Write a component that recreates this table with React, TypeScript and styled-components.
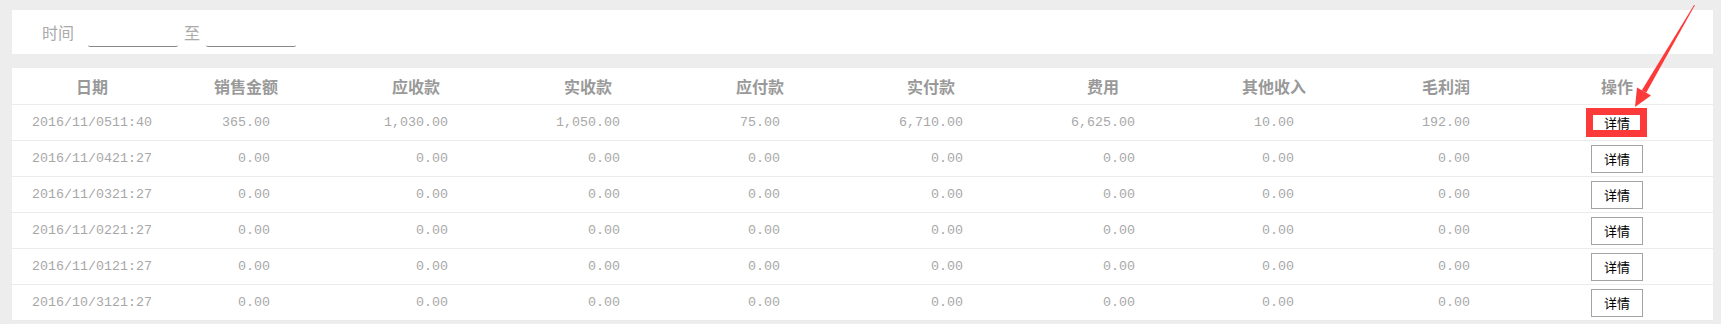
import React from "react";
import styled, { createGlobalStyle } from "styled-components";

const GlobalStyle = createGlobalStyle`
  html, body {
    margin: 0;
    padding: 0;
    background: #ededed;
  }
  * { box-sizing: border-box; }
`;

const COLS = "160px 148px 192px 152px 192px 150px 194px 148px 196px 146px";

const Page = styled.div`
  position: relative;
  width: 1721px;
  height: 324px;
  overflow: hidden;
  padding: 10px 8px 0 12px;
  font-family: "Noto Sans CJK SC", "Noto Sans", sans-serif;
`;

const FilterBar = styled.div`
  height: 44px;
  background: #fff;
  display: flex;
  align-items: center;
  padding-left: 30px;
  color: #aaa;
  font-size: 16px;
`;

const FilterLabel = styled.span`
  margin-right: 14px;
  line-height: 1;
`;

const DateInput = styled.input`
  width: 90px;
  height: 20px;
  margin-top: 10px;
  border: none;
  border-bottom: 1px solid #888;
  border-radius: 0 0 2px 2px;
  background: transparent;
  outline: none;
  padding: 0;
`;

const Separator = styled.span`
  margin: 0 6px;
  line-height: 1;
`;

const TablePanel = styled.div`
  margin-top: 14px;
  background: #fff;
`;

const Row = styled.div<{ $header?: boolean }>`
  display: grid;
  grid-template-columns: ${COLS};
  height: ${(p) => (p.$header ? "37px" : "36px")};
  border-bottom: 1px solid #ebebeb;
`;

const HeadCell = styled.div`
  display: flex;
  align-items: center;
  justify-content: center;
  font-size: 16px;
  font-weight: 700;
  color: #999;
  padding-bottom: 1px;
`;

const Cell = styled.div`
  display: flex;
  align-items: center;
  justify-content: center;
  font-family: "Liberation Mono", "DejaVu Sans Mono", monospace;
  font-size: 13.33px;
  color: #a8a8a8;
  white-space: nowrap;
`;

const Value = styled.span<{ $chars: number }>`
  display: inline-block;
  width: ${(p) => p.$chars}ch;
  text-align: right;
`;

const DetailButton = styled.button`
  width: 52px;
  height: 28px;
  border: 1px solid #a3a3a3;
  background: #fff;
  color: #000;
  font-family: "Noto Sans CJK SC", sans-serif;
  font-size: 13px;
  padding: 0;
  cursor: pointer;
`;

const HighlightBox = styled.div`
  position: absolute;
  left: 1586px;
  top: 108px;
  width: 61px;
  height: 29px;
  border: 7px solid #fd3a3a;
  pointer-events: none;
`;

const ArrowLayer = styled.svg`
  position: absolute;
  left: 0;
  top: 0;
  pointer-events: none;
`;

const headers = ["日期", "销售金额", "应收款", "实收款", "应付款", "实付款", "费用", "其他收入", "毛利润", "操作"];

const zeros = ["0.00", "0.00", "0.00", "0.00", "0.00", "0.00", "0.00", "0.00"];

const rows: string[][] = [
  ["2016/11/0511:40", "365.00", "1,030.00", "1,050.00", "75.00", "6,710.00", "6,625.00", "10.00", "192.00"],
  ["2016/11/0421:27", ...zeros],
  ["2016/11/0321:27", ...zeros],
  ["2016/11/0221:27", ...zeros],
  ["2016/11/0121:27", ...zeros],
  ["2016/10/3121:27", ...zeros],
];

const colChars = rows[0].map((v) => v.length);

export default function App() {
  return (
    <>
      <GlobalStyle />
      <Page>
        <FilterBar>
          <FilterLabel>时间</FilterLabel>
          <DateInput type="text" />
          <Separator>至</Separator>
          <DateInput type="text" />
        </FilterBar>
        <TablePanel>
          <Row $header>
            {headers.map((h) => (
              <HeadCell key={h}>{h}</HeadCell>
            ))}
          </Row>
          {rows.map((r, i) => (
            <Row key={i}>
              {r.map((v, j) => (
                <Cell key={j}>
                  <Value $chars={colChars[j]}>{v}</Value>
                </Cell>
              ))}
              <Cell>
                <DetailButton>详情</DetailButton>
              </Cell>
            </Row>
          ))}
        </TablePanel>
        <HighlightBox />
        <ArrowLayer width="1721" height="324" viewBox="0 0 1721 324">
          <polygon
            points="1695,5 1694,5 1641.8,90.2 1646.2,92.8"
            fill="#fd3a3a"
          />
          <polygon points="1635,107 1637,87.5 1651,95.5" fill="#fd3a3a" />
        </ArrowLayer>
      </Page>
    </>
  );
}
